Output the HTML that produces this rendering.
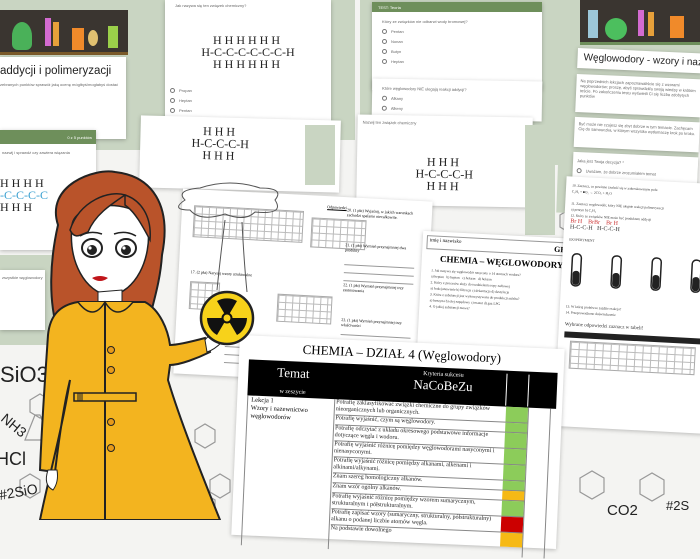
<!DOCTYPE html>
<html><head><meta charset="utf-8"><style>
*{margin:0;padding:0;box-sizing:border-box}
body{width:700px;height:520px;overflow:hidden;background:#f4f4f2;position:relative;font-family:"Liberation Serif",serif}
.a{position:absolute}
.sage{background:#c9d5c2}
.card{background:#fff;box-shadow:0 1px 4px rgba(0,0,0,.25)}
.sans{font-family:"Liberation Sans",sans-serif}
.f{font-family:"Liberation Serif",serif;color:#222;text-align:center;line-height:14px}
.hs{letter-spacing:3px}
.tiny{font-size:4px;color:#666;font-family:"Liberation Sans",sans-serif}
.rad{display:inline-block;width:5px;height:5px;border:1px solid #777;border-radius:50%;margin-right:4px;vertical-align:middle}
.line{border-bottom:1px solid #999;height:8px}
.grid{background-image:linear-gradient(#bbb 1px,transparent 1px),linear-gradient(90deg,#bbb 1px,transparent 1px);background-size:7px 7px;border:1px solid #aaa}
</style></head><body>

<svg class="a" style="left:0;top:0" width="700" height="520">
<g fill="none" stroke="#999" stroke-width="1.2">
<polygon points="30,400 40,394 50,400 50,412 40,418 30,412"/>
<polygon points="195,430 205,424 215,430 215,442 205,448 195,442"/>
<polygon points="210,480 220,474 230,480 230,492 220,498 210,492"/>
<polygon points="195,500 205,494 215,500 215,512 205,518 195,512"/>
<polygon points="20,480 30,474 40,480 40,492 30,498 20,492"/>
<polygon points="580,478 592,471 604,478 604,492 592,499 580,492"/>
<polygon points="640,480 652,473 664,480 664,494 652,501 640,494"/>
<polygon points="560,215 570,209 580,215 580,227 570,233 560,227"/>
<polygon points="575,230 585,224 595,230 595,242 585,248 575,242"/>
<circle cx="627" cy="238" r="12"/><path d="M622,226 v-12 h10 v12"/>
<path d="M25,440 l10,-25 h5 l10,25 z"/>
<path d="M670,240 l10,-10 l10,10"/>
</g>
<text x="0" y="382" font-family="Liberation Sans" font-size="22" fill="#222">SiO3</text>
<text x="-4" y="465" font-family="Liberation Sans" font-size="18" fill="#222">HCl</text>
<text x="0" y="500" font-family="Liberation Sans" font-size="14" fill="#222" transform="rotate(-10 0 500)">#2SiO</text>
<text x="0" y="420" font-family="Liberation Sans" font-size="14" fill="#222" transform="rotate(40 0 420)">NH3</text>
<text x="165" y="440" font-family="Liberation Sans" font-size="11" fill="#333" transform="rotate(35 165 440)">NaOH</text>
<text x="585" y="252" font-family="Liberation Sans" font-size="15" fill="#222">CO2</text>
<text x="640" y="218" font-family="Liberation Sans" font-size="15" fill="#222" transform="rotate(25 640 218)">H2SO4</text>
<text x="607" y="515" font-family="Liberation Sans" font-size="15" fill="#222">CO2</text>
<text x="643" y="255" font-family="Liberation Sans" font-size="13" fill="#222">.NH3</text>
<text x="666" y="510" font-family="Liberation Sans" font-size="13" fill="#222">#2S</text>
</svg>

<!-- top-left form -->
<div class="a sage" style="left:0;top:0;width:160px;height:150px"></div>
<div class="a" style="left:0;top:10px;width:128px;height:45px;background:#3a3530;border-bottom:3px solid #7a5a2a;overflow:hidden">
 <div class="a" style="left:12px;top:12px;width:20px;height:28px;background:#4cbf5e;border-radius:50% 50% 6px 6px;opacity:.9"></div>
 <div class="a" style="left:45px;top:8px;width:6px;height:28px;background:#d36bd0"></div>
 <div class="a" style="left:53px;top:12px;width:6px;height:24px;background:#e6a03a"></div>
 <div class="a" style="left:72px;top:18px;width:12px;height:22px;background:#f08a2a"></div>
 <div class="a" style="left:88px;top:20px;width:10px;height:16px;background:#e0c070;border-radius:50%"></div>
 <div class="a" style="left:108px;top:16px;width:10px;height:22px;background:#9bd04a"></div>
</div>
<div class="a card" style="left:0;top:57px;width:126px;height:82px">
 <div class="sans" style="font-size:11.5px;color:#222;margin:8px 0 0 0">addycji i polimeryzacji</div>
 <div class="tiny" style="margin-top:5px">zebranych punktów sprawdź jaką ocenę mógłbyś/mogłabyś dostać</div>
</div>

<!-- heptane card -->
<div class="a sage" style="left:155px;top:0;width:200px;height:140px"></div>
<div class="a card" style="left:165px;top:0;width:166px;height:122px">
 <div class="tiny" style="margin:3px 0 0 10px">Jak nazywa się ten związek chemiczny?</div>
 <div class="f" style="font-size:12px;margin-top:26px;line-height:12px"><span class="hs">HHHHHH</span><br>H-C-C-C-C-C-C-H<br><span class="hs">HHHHHH</span></div>
 <div class="tiny" style="margin:16px 0 0 5px;line-height:10px"><span class="rad"></span>Propan<br><span class="rad"></span>Heptan<br><span class="rad"></span>Pentan<br><span class="rad"></span>Metan</div>
</div>

<!-- left card with green header -->
<div class="a card" style="left:0;top:130px;width:96px;height:120px">
 <div class="sans" style="background:#6e8f5b;height:14px;color:#fff;font-size:4px;text-align:right;padding:5px 4px 0 0">0 z 5 punktów</div>
 <div class="tiny" style="margin:6px 0 0 2px">nazwij i sprawdź czy zawiera wiązania</div>
 <div class="f" style="font-size:12px;text-align:left;margin-top:22px;line-height:12px"><span class="hs">HHHH</span><br><span style="color:#3aa0d0">-C-C-C-C</span><br><span class="hs">HHH</span></div>
</div>
<div class="a sage" style="left:0;top:255px;width:55px;height:90px"></div>
<div class="a card" style="left:0;top:270px;width:45px;height:60px"><div class="tiny" style="margin:5px 2px">zszystkie węglowodory</div></div>

<!-- propane card -->
<div class="a card" style="left:140px;top:118px;width:200px;height:72px;transform:rotate(1.5deg)">
 <div class="f" style="font-size:12px;margin:8px 0 0 -40px;line-height:12px"><span class="hs">HHH</span><br>H-C-C-C-H<br><span class="hs">HHH</span></div>
</div>
<div class="a sage" style="left:305px;top:125px;width:30px;height:60px"></div>

<!-- top center form -->
<div class="a sage" style="left:360px;top:0;width:205px;height:165px"></div>
<div class="a card" style="left:372px;top:2px;width:170px;height:88px">
 <div class="sans" style="background:#6e8f5b;height:10px;color:#fff;font-size:4px;padding:3px 0 0 6px">TEST: Teoria</div>
 <div class="tiny" style="margin:5px 0 0 10px;line-height:10px">Który ze związków nie odbarwi wody bromowej?<br><span class="rad"></span>Pentan<br><span class="rad"></span>Nonan<br><span class="rad"></span>Butyn<br><span class="rad"></span>Heptan</div>
</div>
<div class="a card" style="left:372px;top:80px;width:170px;height:40px;transform:rotate(1deg)">
 <div class="tiny" style="margin:5px 0 0 10px;line-height:10px">Które węglowodory NIE ulegają reakcji addycji?<br><span class="rad"></span>Alkany<br><span class="rad"></span>Alkeny</div>
</div>
<div class="a card" style="left:357px;top:116px;width:175px;height:90px;transform:rotate(1deg)">
 <div class="tiny" style="margin:5px 0 0 5px">Nazwij ten związek chemiczny</div>
 <div class="f" style="font-size:12px;margin-top:30px;line-height:12px"><span class="hs">HHH</span><br>H-C-C-C-H<br><span class="hs">HHH</span></div>
</div>
<div class="a sage" style="left:525px;top:125px;width:30px;height:110px"></div>

<!-- right form -->
<div class="a sage" style="left:560px;top:0;width:140px;height:215px;transform:rotate(2deg)"></div>
<div class="a" style="left:580px;top:0;width:120px;height:45px;background:#3a3530;border-bottom:3px solid #6e8f5b;overflow:hidden">
 <div class="a" style="left:25px;top:18px;width:22px;height:22px;background:#4cbf5e;border-radius:50%"></div>
 <div class="a" style="left:8px;top:10px;width:10px;height:28px;background:#9cc7d8"></div>
 <div class="a" style="left:58px;top:10px;width:6px;height:26px;background:#d36bd0"></div>
 <div class="a" style="left:68px;top:12px;width:6px;height:24px;background:#e6a03a"></div>
 <div class="a" style="left:90px;top:16px;width:14px;height:22px;background:#f08a2a"></div>
</div>
<div class="a" style="left:578px;top:48px;width:125px;height:160px;transform:rotate(2.5deg);transform-origin:0 0">
 <div class="card sans" style="height:20px;font-size:10px;color:#222;padding:4px 0 0 6px;white-space:nowrap">Węglowodory - wzory i nazewnic</div>
 <div class="card tiny" style="margin-top:6px;height:38px;padding:4px;line-height:5px">Na poprzednich lekcjach zapoznawaliście się z wzorami węglowodorów; proszę, abyś sprawdził/a swoją wiedzę w krótkim teście. Po zakończeniu testu wyświetli Ci się liczba zdobytych punktów</div>
 <div class="card tiny" style="margin-top:5px;height:30px;padding:4px;line-height:5px">Być może nie czujesz się zbyt dobrze w tym temacie. Zachęcam Cię do samouczka, w którym wszystko wytłumaczę krok po kroku.</div>
 <div class="card tiny" style="margin-top:5px;height:58px;padding:4px;line-height:10px">Jaka jest Twoja decyzja? *<br><span class="rad"></span>Uważam, że dobrze zrozumiałem temat<br><span class="rad"></span>Wydaje mi się, że dobrze<br><span class="rad"></span>W ogóle nie rozumiem tego zadania</div>
</div>

<!-- worksheet middle -->
<div class="a card" style="left:178px;top:195px;width:250px;height:185px;transform:rotate(3deg)">
 <div class="a grid" style="left:12px;top:16px;width:110px;height:32px"></div>
 <div class="a grid" style="left:130px;top:22px;width:55px;height:30px"></div>
 <div class="a" style="left:145px;top:8px;font-size:4px;text-decoration:underline">Odpowiedzi</div>
 <div class="a" style="left:165px;top:10px;font-size:4px;width:80px">20. (1 pkt) Wyjaśnij, w jakich warunkach zachodzi spalanie niecałkowite.</div>
 <div class="a" style="left:165px;top:45px;width:75px;font-size:4px">21. (1 pkt) Wymień przynajmniej dwa produkty</div>
 <div class="a" style="left:165px;top:85px;width:75px;font-size:4px">22. (1 pkt) Wymień przynajmniej trzy zastosowania</div>
 <div class="a" style="left:165px;top:120px;width:75px;font-size:4px">23. (1 pkt) Wymień przynajmniej trzy właściwości</div>
 <div class="a" style="left:165px;top:60px;width:70px"><div class="line"></div><div class="line"></div><div class="line"></div></div>
 <div class="a" style="left:165px;top:130px;width:70px"><div class="line"></div><div class="line"></div><div class="line"></div></div>
 <div class="a" style="left:12px;top:80px;font-size:4px">17. (2 pkt) Narysuj wzory strukturalne</div>
 <div class="a grid" style="left:12px;top:92px;width:30px;height:28px"></div>
 <div class="a grid" style="left:100px;top:100px;width:55px;height:28px"></div>
 <div class="a" style="left:50px;top:140px;width:110px"><div class="line"></div><div class="line"></div><div class="line"></div><div class="line"></div></div>
</div>

<!-- CHEMIA WĘGLOWODORY -->
<div class="a card" style="left:420px;top:235px;width:160px;height:120px;transform:rotate(3deg)">
 <div style="border:1px solid #999;margin:4px;height:14px;font-size:5px;padding:2px"><span style="float:right;font-size:8px;font-weight:bold">GR. A</span>imię i nazwisko</div>
 <div style="font-size:9px;font-weight:bold;text-align:center">CHEMIA – WĘGLOWODORY</div>
 <div style="font-size:3.5px;line-height:6px;padding:4px 10px;color:#333">1. Jak nazywa się węglowodór nasycony o 14 atomach wodoru?<br>a) heptan &nbsp; b) heptan &nbsp; c) heksan &nbsp; d) heksan<br>2. Który z procesów służy do rozdzielania ropy naftowej<br>a) frakcjonowanie b) filtracja c) dekantacja d) destylacja<br>3. Która z substancji jest wykorzystywana do produkcji asfaltu?<br>a) benzyna b) olej napędowy c) mazut d) gaz LPG<br>4. O jakiej substancji mowa?</div>
</div>

<!-- right worksheet -->
<div class="a card" style="left:560px;top:180px;width:150px;height:250px;transform:rotate(3deg)">
 <div style="font-size:3.5px;line-height:6px;padding:6px 6px;color:#333">10. Zaznacz, co powinno znaleźć się w zakreskowanym polu<br>C₂H₂ + ■O₂ → 2CO₂ + H₂O<br><br>11. Zaznacz węglowodór, który NIE ulegnie reakcji polimeryzacji<br>a) pentyn b) C₂H₄<br>12. Który ze związków NIE może być produktem addycji<br><span style="color:#c33;font-size:6px">Br H &nbsp;&nbsp; BrBr &nbsp;&nbsp; Br H</span><br><span style="font-size:6px">H-C-C-H &nbsp; H-C-C-H</span><br><br>EKSPERYMENT</div>
 <svg width="150" height="50"><g fill="#fff" stroke="#222" stroke-width="1.5"><rect x="10" y="5" width="9" height="32" rx="4"/><rect x="50" y="5" width="9" height="32" rx="4"/><rect x="90" y="5" width="9" height="32" rx="4"/><rect x="130" y="5" width="9" height="32" rx="4"/></g><g fill="#222"><rect x="11" y="22" width="7" height="14" rx="3"/><rect x="51" y="22" width="7" height="14" rx="3"/><rect x="91" y="22" width="7" height="14" rx="3"/><rect x="131" y="22" width="7" height="14" rx="3"/></g></svg>
 <div style="font-size:3.5px;line-height:6px;padding:0 6px;color:#333">13. W której probówce zajdzie reakcja?<br>14. Przeprowadzono doświadczenie<br><br><span style="font-size:5px">Wybrane odpowiedzi zaznacz w tabeli!</span></div>
 <div style="margin:3px 6px;height:6px;background:#222"></div>
 <div class="grid" style="margin:0 12px;height:28px;background-size:8px 7px"></div>
</div>

<!-- main DZIAŁ 4 page -->
<div class="a card" style="left:240px;top:335px;width:325px;height:200px;transform:rotate(2.5deg);transform-origin:0 0">
 <div style="font-size:13px;text-align:center;margin-top:4px;height:16px">CHEMIA – DZIAŁ 4 (Węglowodory)</div>
 <div style="margin:4px 6px 0 10px;background:#000;height:36px;color:#fff;position:relative">
  <div class="a" style="left:15px;top:4px;font-size:13px;text-align:center;width:60px">Temat<br><span style="font-size:6px">w zeszycie</span></div>
  <div class="a" style="left:150px;top:4px;font-size:6px;text-align:center;width:90px">Kryteria sukcesu<br><span style="font-size:13px">NaCoBeZu</span></div>
  <div class="a" style="left:258px;top:3px;width:1px;height:32px;background:#fff"></div>
  <div class="a" style="left:280px;top:3px;width:1px;height:32px;background:#fff"></div>
 </div>
 <div style="position:relative;margin:0 6px 0 10px;height:150px;border-left:1px solid #888">
  <div class="a" style="left:3px;top:1px;font-size:6.5px;line-height:8px">Lekcja 1<br>Wzory i nazewnictwo<br>węglowodorów</div>
  <div class="a" style="left:86px;top:0;width:1px;height:150px;background:#888"></div>
  <div class="a" style="left:88px;top:0;width:170px;font-size:6px;line-height:7px;color:#222">
   <div style="height:16px;border-bottom:1px solid #888">Potrafię zaklasyfikować związki chemiczne do grupy związków nieorganicznych lub organicznych.</div>
   <div style="height:10px;border-bottom:1px solid #888">Potrafię wyjaśnić, czym są węglowodory.</div>
   <div style="height:16px;border-bottom:1px solid #888">Potrafię odczytać z układu okresowego podstawowe informacje dotyczące węgla i wodoru.</div>
   <div style="height:16px;border-bottom:1px solid #888">Potrafię wyjaśnić różnicę pomiędzy węglowodorami nasyconymi i nienasyconymi.</div>
   <div style="height:16px;border-bottom:1px solid #888">Potrafię wyjaśnić różnicę pomiędzy alkanami, alkenami i alkinami/alkynami.</div>
   <div style="height:10px;border-bottom:1px solid #888">Znam szereg homologiczny alkanów.</div>
   <div style="height:10px;border-bottom:1px solid #888">Znam wzór ogólny alkanów.</div>
   <div style="height:16px;border-bottom:1px solid #888">Potrafię wyjaśnić różnicę pomiędzy wzorem sumarycznym, strukturalnym i półstrukturalnym.</div>
   <div style="height:16px;border-bottom:1px solid #888">Potrafię zapisać wzory (sumaryczny, strukturalny, półstrukturalny) alkanu o podanej liczbie atomów węgla.</div>
   <div style="height:10px">Na podstawie dowolnego</div>
  </div>
  <div class="a" style="left:258px;top:0;width:22px">
   <div style="height:16px;background:#8ccc5a;border-bottom:1px solid #888"></div>
   <div style="height:10px;background:#8ccc5a;border-bottom:1px solid #888"></div>
   <div style="height:16px;background:#8ccc5a;border-bottom:1px solid #888"></div>
   <div style="height:16px;background:#8ccc5a;border-bottom:1px solid #888"></div>
   <div style="height:16px;background:#8ccc5a;border-bottom:1px solid #888"></div>
   <div style="height:10px;background:#8ccc5a;border-bottom:1px solid #888"></div>
   <div style="height:10px;background:#f6b915;border-bottom:1px solid #888"></div>
   <div style="height:16px;background:#8ccc5a;border-bottom:1px solid #888"></div>
   <div style="height:16px;background:#c00;border-bottom:1px solid #888"></div>
   <div style="height:14px;background:#f6b915"></div>
  </div>
  <div class="a" style="left:280px;top:0;width:1px;height:150px;background:#888"></div>
  <div class="a" style="left:302px;top:0;width:1px;height:150px;background:#888"></div>
 </div>
</div>

<!-- girl -->
<svg class="a" style="left:0;top:0" width="700" height="520">
 <g fill="none" stroke="#555" stroke-width="1">
  <path d="M185,200 q-10,-10 15,-12 q30,-10 60,0 q25,0 15,12 q10,15 -20,12 q-10,10 -30,2 q-25,8 -35,-4 q-20,0 -5,-10z"/>
  <path d="M225,220 q-5,40 -8,70 M242,222 q2,40 5,70"/>
 </g>
 <path d="M58,225 C45,185 95,168 115,172 C152,176 172,205 162,255 C160,285 152,305 147,330 L120,312 L80,312 L58,332 C48,300 50,260 58,225Z" fill="#b9532a" stroke="#222" stroke-width="2"/>
 <path d="M72,225 C75,200 140,198 148,225 C152,260 135,292 110,296 C85,292 68,262 72,225Z" fill="#fff" stroke="#222" stroke-width="1.5"/>
 <path d="M70,230 C80,200 110,190 125,195 C110,205 95,215 88,232 C80,235 75,240 70,230Z" fill="#b9532a" stroke="#222" stroke-width="1.5"/>
 <path d="M125,195 C140,200 152,215 150,240 C142,225 135,212 125,205Z" fill="#b9532a" stroke="#222" stroke-width="1.5"/>
 <ellipse cx="92" cy="248" rx="10" ry="9" fill="#fff" stroke="#222" stroke-width="2"/>
 <ellipse cx="126" cy="248" rx="10" ry="9" fill="#fff" stroke="#222" stroke-width="2"/>
 <circle cx="92" cy="250" r="5" fill="#222"/><circle cx="126" cy="250" r="5" fill="#222"/>
 <circle cx="90" cy="248" r="1.6" fill="#fff"/><circle cx="124" cy="248" r="1.6" fill="#fff"/>
 <path d="M80,236 q10,-6 22,-2 M114,234 q12,-4 22,2" stroke="#222" stroke-width="1.5" fill="none"/>
 <path d="M92,278 q8,-4 16,0 q-8,6 -16,0z" fill="#c0151a"/>
 <path d="M98,292 L98,302 L122,302 L122,290Z" fill="#fff" stroke="#222" stroke-width="1"/>
 <path d="M78,302 C60,305 50,315 48,335 C45,380 42,420 40,470 L55,472 C60,430 65,400 70,380 C62,430 48,480 40,520 L220,520 C200,470 180,420 168,380 L170,365 C180,365 198,358 210,352 L205,338 C190,342 178,345 170,345 C168,330 160,310 145,302 Z" fill="#f3b41f" stroke="#222" stroke-width="2"/>
 <path d="M105,302 L105,520" stroke="#222" stroke-width="2"/>
 <path d="M78,302 q15,20 27,0 q12,20 28,0" fill="#f3b41f" stroke="#222" stroke-width="1.5"/>
 <rect x="74" y="393" width="62" height="8" fill="#f3b41f" stroke="#222" stroke-width="1.5"/>
 <g fill="none" stroke="#222" stroke-width="1"><path d="M78,393v8M80,393v8M82,393v8"/></g>
 <g fill="#e79a1a" stroke="#222" stroke-width="1"><circle cx="111" cy="350" r="3.5"/><circle cx="111" cy="370" r="3.5"/><circle cx="111" cy="422" r="3.5"/><circle cx="111" cy="448" r="3.5"/></g>
 <path d="M48,470 q-5,15 5,20 q6,-8 4,-20z" fill="#fff" stroke="#222" stroke-width="1"/>
 <path d="M205,340 q8,-10 15,-8 l2,10 q-8,8 -15,10z" fill="#fff" stroke="#222" stroke-width="1"/>
 <circle cx="227" cy="318" r="26" fill="#f7d21a" stroke="#222" stroke-width="2.5"/>
 <g fill="#111">
  <path d="M227,318 L217,301 A20,20 0 0,1 237,301 Z"/>
  <path d="M227,318 L247,318 A20,20 0 0,1 237,335 Z"/>
  <path d="M227,318 L217,335 A20,20 0 0,1 207,318 Z"/>
  <circle cx="227" cy="318" r="4.5" fill="#f7d21a" stroke="#111" stroke-width="2"/>
 </g>
</svg>

</body></html>
